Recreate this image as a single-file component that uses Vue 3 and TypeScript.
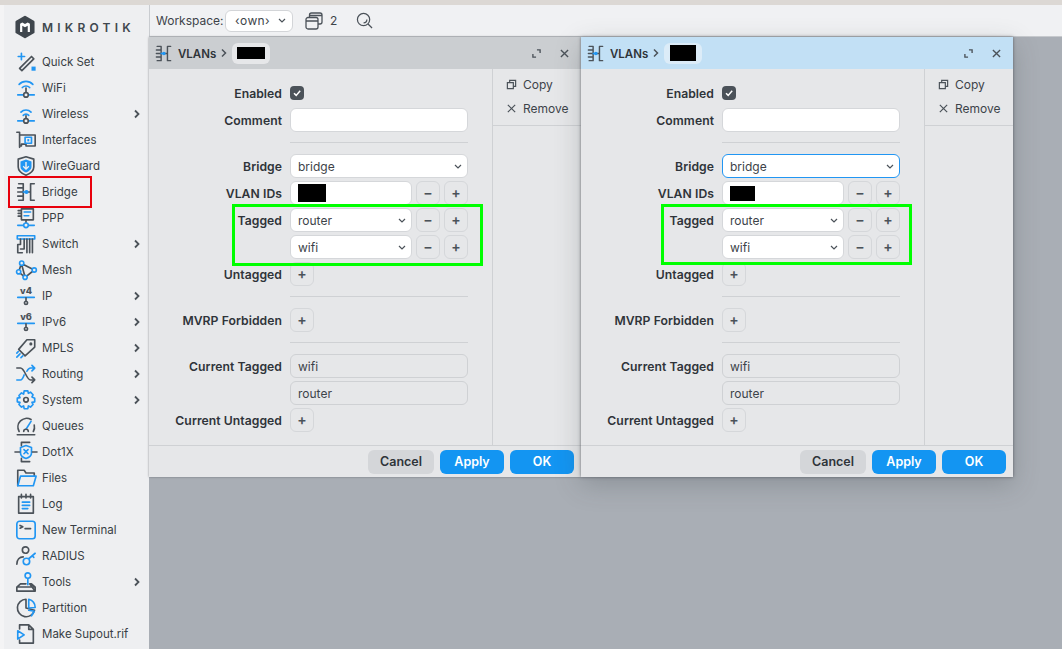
<script setup lang="ts">
type Tone = 'd' | 'b' | 'fb' | 'fd' | 'fw'
type Stroke = [Tone, string]
interface NavItem { label: string; icon: string; more?: boolean }
interface Row { label?: string; kind: 'check' | 'input' | 'select' | 'static' | 'add' | 'hr' | 'ids'; value?: string; stepper?: boolean; focus?: boolean }
interface Win { id: number; active: boolean; markClass: string }

const bridge: Stroke[] = [
  ['d', 'M4 3h5v18H4M3 7.500h6M3 12h6M3 16.500h6'],
  ['d', 'M21 3h-4v18h4M13 12h4'],
  ['b', 'M9 12h3'],
  ['fb', 'M10.200 12a2.300 2.300 0 1 0 4.600 0 2.300 2.300 0 1 0-4.600 0'],
]
const icons: Record<string, Stroke[]> = {
  quick: [['d', 'M5 19 18 6l2.500 2.500L7.500 21.500z'], ['b', 'M7 2.500v7M3.500 6h7'], ['fb', 'M18 17h4.500v4.500H18z']],
  wifi: [['b', 'M4.500 8a10.500 10.500 0 0 1 15 0M8 11.500a5.500 5.500 0 0 1 8 0'], ['d', 'M12 12v7'], ['b', 'M3 19.500h18'], ['fw', 'M9.500 19.500a2.500 2.500 0 1 0 5 0 2.500 2.500 0 1 0-5 0'], ['d', 'M9.500 19.500a2.500 2.500 0 1 0 5 0 2.500 2.500 0 1 0-5 0']],
  wireless: [['b', 'M6.500 10a7.500 7.500 0 0 1 11 0M9 13.500a4 4 0 0 1 6 0'], ['d', 'M12 14v5'], ['b', 'M3 19.500h18'], ['fw', 'M9.500 19.500a2.500 2.500 0 1 0 5 0 2.500 2.500 0 1 0-5 0'], ['d', 'M9.500 19.500a2.500 2.500 0 1 0 5 0 2.500 2.500 0 1 0-5 0']],
  interfaces: [['d', 'M2 3.500h3V20M5 6.500h17v12H12v-2H7v2H5'], ['b', 'M11 9h7v6.500h-7z'], ['fb', 'M13.500 11h2v2.500h-2z']],
  wireguard: [['d', 'M12 2 20.500 4.500v8.500c0 4-3.500 7-8.500 9-5-2-8.500-5-8.500-9V4.500z'], ['fb', 'M12 5l6 2v6c0 2.500-2.500 4.500-6 6-3.500-1.500-6-3.500-6-6V7z'], ['fw', 'M11.200 7.500h1.600v6l1.800-1.800 1 1-3.600 3.600-3.600-3.600 1-1 1.800 1.800z']],
  bridge,
  ppp: [['d', 'M3.500 4h3M3.500 7h3M3.500 10h3M7 2h13v12H7z'], ['b', 'M10 5.500h7M10 9.500h5'], ['d', 'M12 14v5'], ['b', 'M3 20h18'], ['fw', 'M9.500 20a2.500 2.500 0 1 0 5 0 2.500 2.500 0 1 0-5 0'], ['b', 'M9.500 20a2.500 2.500 0 1 0 5 0 2.500 2.500 0 1 0-5 0']],
  switch: [['b', 'M2.500 3h19v3.500h-19z'], ['d', 'M6 6.500v6H3v9h5M10 6.500v11H6M13 6.500v15M16 6.500v15M19 6.500v15']],
  mesh: [['d', 'M7 5l4 15M7 5l14 7-10 8-7-6z'], ['fw', 'M5 4.500a2.300 2.300 0 1 0 4.600 0 2.300 2.300 0 1 0-4.600 0M18.700 12a2.300 2.300 0 1 0 4.600 0 2.300 2.300 0 1 0-4.600 0M8.700 20a2.300 2.300 0 1 0 4.600 0 2.300 2.300 0 1 0-4.600 0M1.700 14a2.300 2.300 0 1 0 4.600 0 2.300 2.300 0 1 0-4.600 0'], ['b', 'M5 4.500a2.300 2.300 0 1 0 4.600 0 2.300 2.300 0 1 0-4.600 0M18.700 12a2.300 2.300 0 1 0 4.600 0 2.300 2.300 0 1 0-4.600 0M8.700 20a2.300 2.300 0 1 0 4.600 0 2.300 2.300 0 1 0-4.600 0M1.700 14a2.300 2.300 0 1 0 4.600 0 2.300 2.300 0 1 0-4.600 0']],
  ip4: [['b', 'M3 13.500h18'], ['d', 'M12 14v3.500M10.300 19.500a1.700 1.700 0 1 0 3.400 0 1.700 1.700 0 1 0-3.400 0']],
  ip6: [['b', 'M3 13.500h18'], ['d', 'M12 14v3.500M10.300 19.500a1.700 1.700 0 1 0 3.400 0 1.700 1.700 0 1 0-3.400 0']],
  mpls: [['d', 'M13 3h8.500v8L11 20.500 4 13.500zM16.500 7.500a.8.800 0 1 0 1.600 0 .8.800 0 1 0-1.600 0'], ['b', 'M2 22l3.500-3.500M6.500 22.500l2-2M2 17.500l1.500-1.500']],
  routing: [['d', 'M2 5.500h4c4.500 0 6.500 13 11 13h4.500M18.500 15.500l3 3-3 3'], ['b', 'M2 18.500h4c2 0 3-3 4-5.500M13 9c1-2 2-3.500 4-3.500h4.500M18.500 2.500l3 3-3 3']],
  system: [['b', 'M10 2h4l.6 2.700 2.300-1.200 2.800 2.800-1.200 2.300L21.500 10v4l-3 .600 1.200 2.300-2.800 2.800-2.300-1.200L14 21.500h-4l-.6-3-2.300 1.200-2.800-2.800 1.200-2.300-3-.600v-4l3-.600-1.200-2.300 2.800-2.800 2.300 1.200z'], ['d', 'M9.500 11.800a2.500 2.500 0 1 0 5 0 2.500 2.500 0 1 0-5 0']],
  queues: [['d', 'M4.500 18a9.500 9.500 0 0 1 13-13M2.500 21.500h19M21 11a9.500 9.500 0 0 1-1 7'], ['b', 'M12 15.500l5.500-8.500'], ['d', 'M9.500 18a2.500 2.500 0 1 1 5 0']],
  dot1x: [['b', 'M12 5l6 2v6c0 3-3 5-6 6-3-1-6-3-6-6V7zM9.800 9.500l4.400 4.400M14.200 9.500l-4.400 4.400'], ['d', 'M0 12h5M19 12h5M7 5V1.500h9M7 19v3.500h9']],
  files: [['d', 'M3 20.500V3.500h7l2 3h9v3.500'], ['b', 'M3 20.500l3-10.500h17l-3 10.500z']],
  log: [['d', 'M4 4h16v18H4zM7 1.500v4M12 1.500v4M17 1.500v4'], ['b', 'M8 10h8M8 13.500h8M8 17h6']],
  terminal: [['b', 'M5 2.500h14a3 3 0 0 1 3 3v13a3 3 0 0 1-3 3H5a3 3 0 0 1-3-3v-13a3 3 0 0 1 3-3z'], ['d', 'M5.500 7l3 1.500-3 1.500M11 10.500h6']],
  radius: [['d', 'M8 5.500a3.500 3.500 0 1 0 7 0 3.500 3.500 0 1 0-7 0M2 21c0-5 3-8 7-8'], ['b', 'M9 18a3.500 3.500 0 1 0 7 0 3.500 3.500 0 1 0-7 0M15 15l7-6M19 12l1.500 1.500']],
  tools: [['b', 'M11 5a3 3 0 1 0 6 0 3 3 0 1 0-6 0M14 8v7'], ['d', 'M2 22v-4.500l4-3.500h6M16 14h2l4 3.500V22zM2 17.500h20M2 22h20']],
  partition: [['d', 'M12 2.500a9.500 9.500 0 1 0 9.300 12L12 12z'], ['b', 'M15 2.500a9.500 9.500 0 0 1 7 9L15 12zM15 14.500l6 1-3 5']],
  supout: [['d', 'M5 6.500V2h10l5 5v15H5v-3.500M15 2v5h5'], ['b', 'M3 8.500l7 4.500-7 4.500z']],
}

const nav: NavItem[] = [
  { label: 'Quick Set', icon: 'quick' },
  { label: 'WiFi', icon: 'wifi' },
  { label: 'Wireless', icon: 'wireless', more: true },
  { label: 'Interfaces', icon: 'interfaces' },
  { label: 'WireGuard', icon: 'wireguard' },
  { label: 'Bridge', icon: 'bridge' },
  { label: 'PPP', icon: 'ppp' },
  { label: 'Switch', icon: 'switch', more: true },
  { label: 'Mesh', icon: 'mesh' },
  { label: 'IP', icon: 'ip4', more: true },
  { label: 'IPv6', icon: 'ip6', more: true },
  { label: 'MPLS', icon: 'mpls', more: true },
  { label: 'Routing', icon: 'routing', more: true },
  { label: 'System', icon: 'system', more: true },
  { label: 'Queues', icon: 'queues' },
  { label: 'Dot1X', icon: 'dot1x' },
  { label: 'Files', icon: 'files' },
  { label: 'Log', icon: 'log' },
  { label: 'New Terminal', icon: 'terminal' },
  { label: 'RADIUS', icon: 'radius' },
  { label: 'Tools', icon: 'tools', more: true },
  { label: 'Partition', icon: 'partition' },
  { label: 'Make Supout.rif', icon: 'supout' },
]

const baseRows: Row[] = [
  { label: 'Enabled', kind: 'check' },
  { label: 'Comment', kind: 'input' },
  { kind: 'hr' },
  { label: 'Bridge', kind: 'select', value: 'bridge' },
  { label: 'VLAN IDs', kind: 'ids', stepper: true },
  { label: 'Tagged', kind: 'select', value: 'router', stepper: true },
  { kind: 'select', value: 'wifi', stepper: true },
  { label: 'Untagged', kind: 'add' },
  { kind: 'hr' },
  { label: 'MVRP Forbidden', kind: 'add' },
  { kind: 'hr' },
  { label: 'Current Tagged', kind: 'static', value: 'wifi' },
  { kind: 'static', value: 'router' },
  { label: 'Current Untagged', kind: 'add' },
]

const windows: Win[] = [
  { id: 0, active: false, markClass: 'first' },
  { id: 1, active: true, markClass: 'second' },
]

function isFocused(w: Win, r: Row): boolean {
  return w.active && r.label === 'Bridge'
}
</script>

<template>
  <div class="page">
    <div class="topstrip"></div>
    <div class="main">
      <aside class="sidebar">
        <div class="logo">
          <svg class="logomark" viewBox="0 0 20 22">
            <path class="hex" d="M10 2l7.500 4.300v9.400L10 20l-7.500-4.300V6.300z" />
            <path class="hexm" d="M5.500 15.500V8l2-1.100 2.500 1.400 2.500-1.400 2 1.100v7.500h-2V9.800L10 11.200 7.500 9.800v5.700z" />
          </svg>
          <span class="wordmark">MIKROTIK</span>
        </div>
        <nav class="navlist">
          <div v-for="item in nav" :key="item.label" class="navitem">
            <svg class="navicon" viewBox="0 0 24 24">
              <text v-if="item.icon === 'ip4'" x="12" y="10" class="vtext">v4</text>
              <text v-if="item.icon === 'ip6'" x="12" y="10" class="vtext">v6</text>
              <path v-for="(s, i) in icons[item.icon]" :key="i" :class="'t-' + s[0]" :d="s[1]" />
            </svg>
            <span class="navlabel">{{ item.label }}</span>
            <svg v-if="item.more" class="navmore" viewBox="0 0 8 10"><path d="M2 1.500 5.500 5 2 8.500" /></svg>
          </div>
        </nav>
        <div class="redbox"></div>
      </aside>
      <div class="content">
        <header class="toolbar">
          <span class="wslabel">Workspace:</span>
          <div class="wsselect">
            <span class="wsvalue">‹own›</span>
            <svg class="caret" viewBox="0 0 8 5"><path d="M1 1l3 3 3-3" /></svg>
          </div>
          <svg class="tbicon stack" viewBox="0 0 18 18"><path d="M1 7.500a2 2 0 0 1 2-2h8a2 2 0 0 1 2 2V15a2 2 0 0 1-2 2H3a2 2 0 0 1-2-2zM1 9h12M4.500 5.500V3a2 2 0 0 1 2-2H15a2 2 0 0 1 2 2v7a2 2 0 0 1-2 2h-2M4.500 3.500H17" /></svg>
          <span class="wscount">2</span>
          <svg class="tbicon search" viewBox="0 0 18 18"><path d="M1.500 8a6.500 6.500 0 1 0 13 0 6.500 6.500 0 1 0-13 0M13 13l4 4" /><path d="M8 11.500A3.500 3.500 0 0 0 11.500 8" /></svg>
        </header>
        <div class="desktop">
          <section v-for="w in windows" :key="w.id" class="window" :class="[w.markClass, { active: w.active }]">
            <header class="titlebar">
              <svg class="titleicon" viewBox="0 0 24 24">
                <path v-for="(s, i) in bridge" :key="i" :class="'t-' + s[0]" :d="s[1]" />
              </svg>
              <span class="titletext">VLANs</span>
              <svg class="crumb" viewBox="0 0 8 10"><path d="M2 1.500 5.500 5 2 8.500" /></svg>
              <span class="pill"><span class="pillmark"></span></span>
              <span class="spacer"></span>
              <svg class="winbtn expand" viewBox="0 0 10 10"><path d="M5.500 1h3.500v3.500M4.500 9H1V5.500" /></svg>
              <svg class="winbtn close" viewBox="0 0 10 10"><path d="M1 1l8 8M9 1l-8 8" /></svg>
            </header>
            <div class="winbody">
              <div class="form">
                <template v-for="(r, i) in baseRows" :key="i">
                  <div v-if="r.kind === 'hr'" class="rule"></div>
                  <div v-else class="row">
                    <label class="rowlabel">{{ r.label }}</label>
                    <div class="rowcontrols">
                      <span v-if="r.kind === 'check'" class="check">
                        <svg viewBox="0 0 10 10"><path d="M2 5.200 4.200 7.400 8.200 2.800" /></svg>
                      </span>
                      <div v-else-if="r.kind === 'input'" class="field wide"></div>
                      <div v-else-if="r.kind === 'ids'" class="field narrow"><span class="idmark"></span></div>
                      <div v-else-if="r.kind === 'select'" class="field select" :class="[r.stepper ? 'narrow' : 'wide', { focus: isFocused(w, r) }]">
                        <span>{{ r.value }}</span>
                        <svg class="caret" viewBox="0 0 8 5"><path d="M1 1l3 3 3-3" /></svg>
                      </div>
                      <div v-else-if="r.kind === 'static'" class="field static wide"><span>{{ r.value }}</span></div>
                      <button v-if="r.stepper" class="step">−</button>
                      <button v-if="r.stepper || r.kind === 'add'" class="step">+</button>
                    </div>
                  </div>
                </template>
              </div>
              <aside class="actions">
                <div class="actionlist">
                  <div class="action">
                    <svg viewBox="0 0 12 12"><path d="M4 4V1.500h6.500V8H8M1.500 4H8v6.500H1.500z" /></svg>
                    <span>Copy</span>
                  </div>
                  <div class="action">
                    <svg viewBox="0 0 12 12"><path d="M2 2l8 8M10 2l-8 8" /></svg>
                    <span>Remove</span>
                  </div>
                </div>
              </aside>
            </div>
            <footer class="winfoot">
              <button class="btn cancel">Cancel</button>
              <button class="btn primary">Apply</button>
              <button class="btn primary">OK</button>
            </footer>
            <div class="greenbox"></div>
          </section>
        </div>
      </div>
    </div>
  </div>
</template>

<style>
html, body { margin: 0; height: 100%; overflow: hidden; }
</style>

<style scoped>
.page {
  width: 1062px;
  height: 649px;
  display: flex;
  flex-direction: column;
  overflow: hidden;
  font-family: Inter, "Noto Sans", sans-serif;
  font-size: 12px;
  color: #2f3439;
  background: #f4f4f5;
}
.topstrip { height: 5px; flex: none; background: #dcd8d4; }
.main { flex: 1; display: flex; min-height: 0; padding-left: 4px; }

.sidebar {
  position: relative;
  width: 145px;
  flex: none;
  background: #eeeff1;
  display: flex;
  flex-direction: column;
}
.logo { display: flex; align-items: center; height: 36px; padding: 6px 0 0 10px; box-sizing: border-box; margin-top: 1px; }
.logomark { width: 22px; height: 24px; flex: none; }
.hex { fill: #3f464d; stroke: #3f464d; stroke-width: 2.500; stroke-linejoin: round; }
.hexm { fill: #fff; }
.wordmark {
  margin-left: 6px;
  font-size: 12px;
  font-weight: 600;
  letter-spacing: 4.200px;
  color: #40474e;
}
.navlist { display: flex; flex-direction: column; margin-top: 7px; }
.navitem { display: flex; align-items: center; height: 26px; padding-left: 11px; }
.navicon { width: 22px; height: 22px; flex: none; overflow: visible; }
.navlabel { margin-left: 5px; font-size: 11.500px; color: #383e44; white-space: nowrap; }
.navmore { width: 8px; height: 10px; margin-left: auto; margin-right: 8px; fill: none; stroke: #4b5259; stroke-width: 1.800; }
.t-d { fill: none; stroke: #4b5259; stroke-width: 1.800; stroke-linejoin: round; stroke-linecap: round; }
.t-b { fill: none; stroke: #2196f3; stroke-width: 1.800; stroke-linejoin: round; stroke-linecap: round; }
.t-fb { fill: #2196f3; }
.t-fd { fill: #4b5259; }
.t-fw { fill: #eeeff1; }
.vtext { font-size: 10px; font-weight: 800; fill: #4b5259; text-anchor: middle; font-family: Inter, sans-serif; }
.redbox {
  position: absolute;
  left: 4px;
  top: 171px;
  width: 84px;
  height: 32px;
  box-sizing: border-box;
  border: 2px solid #e8000c;
  pointer-events: none;
}

.content { flex: 1; min-width: 0; display: flex; flex-direction: column; }
.toolbar {
  height: 32px;
  flex: none;
  box-sizing: border-box;
  display: flex;
  align-items: center;
  padding-left: 6px;
  background: #f0f1f3;
  border-left: 1px solid #c9ccd0;
  border-bottom: 1px solid #c6c9cd;
}
.wslabel { color: #3d4349; width: 69px; flex: none; }
.wsselect {
  width: 68px;
  height: 22px;
  box-sizing: border-box;
  background: #fff;
  border: 1px solid #d3d5d8;
  border-radius: 6px;
  display: flex;
  align-items: center;
  padding: 0 6px 0 9px;
  justify-content: space-between;
  color: #3d4349;
}
.wsvalue { letter-spacing: 0.400px; }
.caret { width: 8px; height: 5px; fill: none; stroke: #4b5259; stroke-width: 1.200; flex: none; }
.tbicon { fill: none; stroke: #4b5259; stroke-width: 1.300; }
.stack { width: 18px; height: 18px; margin-left: 12px; }
.wscount { margin-left: 7px; color: #3d4349; }
.search { width: 17px; height: 17px; margin-left: 19px; }

.desktop { position: relative; flex: 1; background: #a9aeb5; }
.window {
  position: absolute;
  top: 0;
  width: 432px;
  height: 440px;
  display: flex;
  flex-direction: column;
  background: #e6e7e9;
  box-shadow: 0 0 2px rgba(60, 66, 72, 0.55);
}
.window.first { left: 0; }
.window.second { left: 432px; box-shadow: 0 0 3px rgba(60, 66, 72, 0.7), 0 8px 24px rgba(60, 66, 72, 0.25); }
.titlebar {
  height: 32px;
  flex: none;
  display: flex;
  align-items: center;
  padding: 0 12px 0 5px;
  background: #cbced1;
}
.window.active .titlebar { background: #c2e0f5; }
.titleicon { width: 19px; height: 19px; flex: none; }
.titletext { margin-left: 5px; padding-top: 1px; font-weight: 600; font-size: 11.500px; color: #2f3439; }
.crumb { width: 8px; height: 10px; margin-left: 4px; fill: none; stroke: #4b5259; stroke-width: 1.500; }
.pill { margin-left: 4px; width: 38px; height: 21px; border-radius: 6px; background: #e6e7e9; display: flex; align-items: center; justify-content: center; }
.window.active .pill { background: #dcecf8; }
.pillmark { width: 28px; height: 12px; background: #000; }
.window.active .pillmark { width: 26px; height: 16px; }
.spacer { flex: 1; }
.winbtn { fill: none; stroke: #4b5259; stroke-width: 1.500; }
.expand { width: 9px; height: 9px; }
.close { width: 9px; height: 9px; margin-left: 19px; }

.winbody { flex: 1; min-height: 0; display: flex; }
.form { width: 343px; box-sizing: border-box; padding: 12px 0 0; display: flex; flex-direction: column; gap: 3px; flex: none; }
.row { display: flex; height: 24px; align-items: center; }
.rowlabel { width: 133px; text-align: right; font-weight: 600; font-size: 12.200px; color: #2f3439; white-space: nowrap; flex: none; letter-spacing: 0.050px; }
.rowcontrols { margin-left: 8px; width: 178px; display: flex; align-items: center; gap: 4px; }
.rule { height: 1px; background: #cfd1d4; margin: 7px 0 8px 141px; width: 178px; }
.check { width: 14px; height: 14px; border-radius: 4px; background: #4b5259; display: flex; align-items: center; justify-content: center; }
.check svg { width: 10px; height: 10px; fill: none; stroke: #fff; stroke-width: 1.500; }
.field {
  height: 24px;
  box-sizing: border-box;
  border: 1px solid #d5d7da;
  border-radius: 6px;
  background: #fff;
  display: flex;
  align-items: center;
  padding: 0 7px;
  color: #3d4349;
  flex: none;
}
.field.wide { width: 178px; }
.field.narrow { width: 122px; }
.field.select { justify-content: space-between; padding-right: 5px; }
.field.static { background: #e6e7e9; border-color: #cfd1d4; }
.field.focus { border-color: #2196f3; }
.idmark { width: 28px; height: 18px; background: #000; }
.window.active .idmark { width: 25px; height: 15px; }
.step {
  width: 24px;
  height: 24px;
  padding: 0;
  box-sizing: border-box;
  border: 1px solid #d5d7da;
  border-radius: 6px;
  background: #e6e7e9;
  font: 600 14px/1 Inter, sans-serif;
  color: #4b5259;
  flex: none;
}
.actions { flex: 1; border-left: 1px solid #cfd1d4; }
.actionlist { display: flex; flex-direction: column; padding: 4px 0 4px; border-bottom: 1px solid #cfd1d4; }
.action { display: flex; align-items: center; height: 24px; padding-left: 13px; color: #3d4349; position: relative; top: -1px; }
.action svg { width: 11px; height: 11px; fill: none; stroke: #4b5259; stroke-width: 1.300; flex: none; }
.action span { margin-left: 6px; }
.winfoot {
  height: 32px;
  flex: none;
  box-sizing: border-box;
  border-top: 1px solid #cfd1d4;
  display: flex;
  align-items: center;
  justify-content: flex-end;
  gap: 6px;
  padding-right: 7px;
}
.btn { height: 24px; border: none; border-radius: 6px; padding: 0 0 1px; font: 600 12.500px Inter, sans-serif; }
.btn.cancel { width: 66px; background: #d4d6d9; color: #2f3439; }
.btn.primary { width: 64px; background: #1395f2; color: #fff; }
.greenbox {
  position: absolute;
  left: 83px;
  top: 167px;
  width: 251px;
  height: 62px;
  box-sizing: border-box;
  border: 3px solid #0f0;
  pointer-events: none;
}
.window.active .greenbox { left: 80px; height: 61px; }
</style>
